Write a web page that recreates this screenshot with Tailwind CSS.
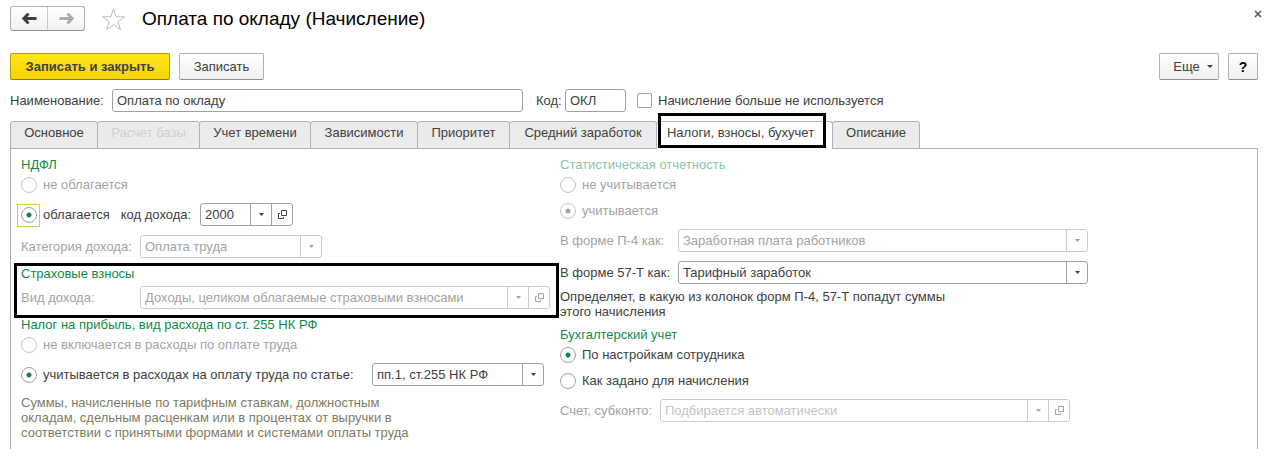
<!DOCTYPE html>
<html lang="ru">
<head>
  <meta charset="UTF-8" />
  <meta name="viewport" content="width=device-width, initial-scale=1.0" />
  <title>Оплата по окладу (Начисление)</title>
  <script src="https://cdn.jsdelivr.net/npm/@tailwindcss/browser@4"></script>
</head>
<body class="bg-white font-['Liberation_Sans',Arial,sans-serif] text-[13px] leading-4 text-[#404040]">

  <!-- Title bar -->
  <header class="flex items-center pl-[10px] pr-[3px] pt-1.5">
    <div class="flex h-[25px] w-[75px] rounded-[3px] border border-[#b0b0b0] border-b-[#8f8f8f] bg-gradient-to-b from-white to-[#f2f2f2]">
      <button type="button" aria-label="Назад" class="flex flex-1 items-center justify-center border-r border-[#c8c8c8]">
        <svg width="15" height="11" viewBox="0 0 15 11"><path d="M6.500 0.500 1.800 5.500l4.700 5M2 5.500H14.500" fill="none" stroke="#404040" stroke-width="2.800"/></svg>
      </button>
      <button type="button" aria-label="Вперед" class="flex flex-1 items-center justify-center">
        <svg width="15" height="11" viewBox="0 0 15 11"><path d="M8.500 0.500l4.700 5-4.700 5M13 5.500H0.500" fill="none" stroke="#ababab" stroke-width="2.800"/></svg>
      </button>
    </div>
    <button type="button" aria-label="В избранное" class="ml-4">
      <svg class="block" width="25" height="24" viewBox="0 0 25 24"><path d="M12.5 2l2.7 7.8h8.3l-6.7 4.9 2.6 7.9-6.9-4.9-6.9 4.9 2.6-7.9L1.5 9.800h8.300z" fill="#fff" stroke="#b8bcc0" stroke-width="1"/></svg>
    </button>
    <h1 class="ml-4 text-[19px] leading-6 text-black">Оплата по окладу (Начисление)</h1>
    <button type="button" aria-label="Закрыть" class="ml-auto flex h-4 w-4 items-center justify-center self-start">
      <svg width="8" height="8" viewBox="0 0 8 8"><path d="M1 1l6 6M7 1L1 7" stroke="#555" stroke-width="1.5"/></svg>
    </button>
  </header>

  <main class="pl-[10px] pr-[11px]">
    <!-- Command bar -->
    <div class="mt-[22px] flex gap-[9px]">
      <button type="button" class="h-[27px] w-[160px] rounded-xs border border-[#b59c00] border-b-[#8f7c00] bg-gradient-to-b from-[#ffe619] to-[#f7d600] font-bold">Записать и закрыть</button>
      <button type="button" class="h-[27px] w-[85px] rounded-xs border border-[#b0b0b0] border-b-[#8f8f8f] bg-gradient-to-b from-white to-[#f0f0f0]">Записать</button>
      <button type="button" class="ml-auto flex h-[27px] w-[60px] items-center justify-center gap-[7px] rounded-xs border border-[#b0b0b0] border-b-[#8f8f8f] bg-gradient-to-b from-white to-[#f0f0f0] pl-2">
        Еще
        <svg width="6" height="3" viewBox="0 0 6 3"><path d="M0 0h6L3 3z" fill="#404040"/></svg>
      </button>
      <button type="button" aria-label="Справка" class="h-[27px] w-[30px] rounded-xs border border-[#b0b0b0] border-b-[#8f8f8f] bg-gradient-to-b from-white to-[#f0f0f0] text-sm font-bold text-black">?</button>
    </div>

    <!-- Name and code -->
    <div class="mt-[9px] flex items-center">
      <label for="name" class="w-[102px]">Наименование:</label>
      <input id="name" type="text" value="Оплата по окладу" class="h-[23px] w-[411px] rounded-[3px] border border-[#a0a0a0] px-1" />
      <label for="code" class="ml-[13px] w-[29px]">Код:</label>
      <input id="code" type="text" value="ОКЛ" class="h-[23px] w-[61px] rounded-[3px] border border-[#a0a0a0] px-1" />
      <input id="unused" type="checkbox" class="ml-[11px] h-[15px] w-[15px] appearance-none rounded-xs border border-[#a0a0a0] bg-white" />
      <label for="unused" class="ml-1.5">Начисление больше не используется</label>
    </div>

    <!-- Tabs -->
    <nav class="relative z-10 mt-[9px] -mb-px flex h-7">
      <button type="button" class="w-[88px] rounded-t-[3px] border border-[#b0b0b0] bg-[#ebebeb] pb-1">Основное</button>
      <button type="button" disabled class="-ml-px w-[103px] rounded-t-[3px] border border-[#b0b0b0] bg-[#ebebeb] pb-1 text-[#d0d0d0]">Расчет базы</button>
      <button type="button" class="-ml-px w-[112px] rounded-t-[3px] border border-[#b0b0b0] bg-[#ebebeb] pb-1">Учет времени</button>
      <button type="button" class="-ml-px w-[108px] rounded-t-[3px] border border-[#b0b0b0] bg-[#ebebeb] pb-1">Зависимости</button>
      <button type="button" class="-ml-px w-[93px] rounded-t-[3px] border border-[#b0b0b0] bg-[#ebebeb] pb-1">Приоритет</button>
      <button type="button" class="-ml-px w-[148px] rounded-t-[3px] border border-[#b0b0b0] bg-[#ebebeb] pb-1">Средний заработок</button>
      <button type="button" class="relative -ml-px w-[177px] rounded-t-[3px] border border-[#b0b0b0] border-b-white bg-white pb-1 pr-2">
        Налоги, взносы, бухучет
        <span class="absolute -top-[9px] left-[1px] h-[35px] w-[168px] border-[3px] border-black"></span>
      </button>
      <button type="button" class="-ml-px w-[88px] rounded-t-[3px] border border-[#b0b0b0] bg-[#ebebeb] pb-1">Описание</button>
    </nav>

    <!-- Tab content -->
    <div class="grid grid-cols-[539px_1fr] border-x border-t border-[#b0b0b0] pb-[9px] pl-[10px] pt-2">
      <section>
        <h2 class="text-[#0f8a4c]">НДФЛ</h2>
        <label class="mt-0.5 flex h-5 items-center gap-1.5 text-[#a3a3a3]">
          <input type="radio" name="ndfl" disabled class="h-4 w-4 appearance-none rounded-full border border-[#c4c4c4]" />
          не облагается
        </label>
        <div class="mt-2 flex items-center">
          <label class="relative flex items-center gap-1.5">
            <input type="radio" name="ndfl" checked class="h-4 w-4 appearance-none rounded-full border border-[#a0a0a0] bg-[radial-gradient(circle,#0f8a4c_2px,transparent_3px)]" />
            облагается
            <span class="absolute -left-1 -top-[3px] h-[23px] w-[23px] border border-[#e6c83c]"></span>
          </label>
          <label for="income-code" class="ml-[11px]">код дохода:</label>
          <div class="ml-auto mr-[267px] flex h-[23px] w-[93px] rounded-[3px] border border-[#a0a0a0]">
            <div class="relative flex-1">
              <select id="income-code" class="h-full w-full appearance-none px-1"><option>2000</option></select>
              <span class="pointer-events-none absolute inset-y-0 right-0 flex w-[21px] items-center justify-center border-l border-[#a0a0a0]">
                <svg width="5" height="3" viewBox="0 0 5 3"><path d="M0 0h5L2.500 3z" fill="#404040"/></svg>
              </span>
            </div>
            <button type="button" aria-label="Открыть" class="flex w-[21px] items-center justify-center border-l border-[#a0a0a0]">
              <svg width="9" height="9" viewBox="0 0 9 9"><path d="M3.500 0.500h5v5h-5zM2 3.500H0.500v5h5V7" fill="none" stroke="#404040"/></svg>
            </button>
          </div>
        </div>
        <div class="mt-[9px] flex items-center text-[#a3a3a3]">
          <label for="category" class="w-[119px]">Категория дохода:</label>
          <div class="relative h-[23px] w-[182px] rounded-[3px] border border-[#cacaca]">
            <select id="category" disabled class="h-full w-full appearance-none px-1"><option>Оплата труда</option></select>
            <span class="pointer-events-none absolute inset-y-0 right-0 flex w-[21px] items-center justify-center border-l border-[#cacaca]">
              <svg width="5" height="3" viewBox="0 0 5 3"><path d="M0 0h5L2.500 3z" fill="#a3a3a3"/></svg>
            </span>
          </div>
        </div>

        <div class="relative mt-2">
          <h2 class="text-[#0f8a4c]">Страховые взносы</h2>
          <div class="mt-1 flex items-center text-[#a3a3a3]">
            <label for="income-kind" class="w-[119px]">Вид дохода:</label>
            <div class="flex h-[23px] w-[410px] rounded-[3px] border border-[#cacaca]">
              <div class="relative flex-1">
                <select id="income-kind" disabled class="h-full w-full appearance-none px-1"><option>Доходы, целиком облагаемые страховыми взносами</option></select>
                <span class="pointer-events-none absolute inset-y-0 right-0 flex w-[21px] items-center justify-center border-l border-[#cacaca]">
                  <svg width="5" height="3" viewBox="0 0 5 3"><path d="M0 0h5L2.500 3z" fill="#a3a3a3"/></svg>
                </span>
              </div>
              <button type="button" aria-label="Открыть" class="flex w-[21px] items-center justify-center border-l border-[#cacaca]">
                <svg width="9" height="9" viewBox="0 0 9 9"><path d="M3.500 0.500h5v5h-5zM2 3.500H0.500v5h5V7" fill="none" stroke="#a3a3a3"/></svg>
              </button>
            </div>
          </div>
          <span class="pointer-events-none absolute -bottom-[9px] -left-[7px] -top-[3px] right-px border-[3px] border-black"></span>
        </div>

        <h2 class="mt-2 text-[#0f8a4c]">Налог на прибыль, вид расхода по ст. 255 НК РФ</h2>
        <label class="mt-0.5 flex h-5 items-center gap-1.5 text-[#a3a3a3]">
          <input type="radio" name="profit" disabled class="h-4 w-4 appearance-none rounded-full border border-[#c4c4c4]" />
          не включается в расходы по оплате труда
        </label>
        <div class="mt-2 flex items-center">
          <label class="flex w-[351px] items-center gap-1.5">
            <input type="radio" name="profit" checked class="h-4 w-4 appearance-none rounded-full border border-[#a0a0a0] bg-[radial-gradient(circle,#0f8a4c_2px,transparent_3px)]" />
            учитывается в расходах на оплату труда по статье:
          </label>
          <div class="relative h-[23px] w-[172px] rounded-[3px] border border-[#a0a0a0]">
            <select aria-label="Статья" class="h-full w-full appearance-none px-1"><option>пп.1, ст.255 НК РФ</option></select>
            <span class="pointer-events-none absolute inset-y-0 right-0 flex w-[21px] items-center justify-center border-l border-[#a0a0a0]">
              <svg width="5" height="3" viewBox="0 0 5 3"><path d="M0 0h5L2.500 3z" fill="#404040"/></svg>
            </span>
          </div>
        </div>
        <p class="mt-[9px] leading-[15px] text-[#7c7c64]">
          Суммы, начисленные по тарифным ставкам, должностным<br>
          окладам, сдельным расценкам или в процентах от выручки в<br>
          соответствии с принятыми формами и системами оплаты труда
        </p>
      </section>

      <section>
        <h2 class="text-[#87c5a5]">Статистическая отчетность</h2>
        <label class="mt-0.5 flex h-5 items-center gap-1.5 text-[#a3a3a3]">
          <input type="radio" name="stat" disabled class="h-4 w-4 appearance-none rounded-full border border-[#c4c4c4]" />
          не учитывается
        </label>
        <label class="mt-1.5 flex h-5 items-center gap-1.5 text-[#a3a3a3]">
          <input type="radio" name="stat" checked disabled class="h-4 w-4 appearance-none rounded-full border border-[#c4c4c4] bg-[radial-gradient(circle,#a3a3a3_2px,transparent_3px)]" />
          учитывается
        </label>
        <div class="mt-2 flex items-center text-[#a3a3a3]">
          <label for="form-p4" class="w-[118px]">В форме П-4 как:</label>
          <div class="relative h-[23px] w-[410px] rounded-[3px] border border-[#cacaca]">
            <select id="form-p4" disabled class="h-full w-full appearance-none px-1"><option>Заработная плата работников</option></select>
            <span class="pointer-events-none absolute inset-y-0 right-0 flex w-[21px] items-center justify-center border-l border-[#cacaca]">
              <svg width="5" height="3" viewBox="0 0 5 3"><path d="M0 0h5L2.500 3z" fill="#a3a3a3"/></svg>
            </span>
          </div>
        </div>
        <div class="mt-[9px] flex items-center">
          <label for="form-57t" class="w-[118px]">В форме 57-Т как:</label>
          <div class="relative h-[23px] w-[410px] rounded-[3px] border border-[#a0a0a0]">
            <select id="form-57t" class="h-full w-full appearance-none px-1"><option>Тарифный заработок</option></select>
            <span class="pointer-events-none absolute inset-y-0 right-0 flex w-[21px] items-center justify-center border-l border-[#a0a0a0]">
              <svg width="5" height="3" viewBox="0 0 5 3"><path d="M0 0h5L2.500 3z" fill="#404040"/></svg>
            </span>
          </div>
        </div>
        <p class="mt-[5px] leading-[15px]">
          Определяет, в какую из колонок форм П-4, 57-Т попадут суммы<br>
          этого начисления
        </p>

        <h2 class="mt-2 text-[#0f8a4c]">Бухгалтерский учет</h2>
        <label class="mt-0.5 flex h-5 items-center gap-1.5">
          <input type="radio" name="accounting" checked class="h-4 w-4 appearance-none rounded-full border border-[#a0a0a0] bg-[radial-gradient(circle,#0f8a4c_2px,transparent_3px)]" />
          По настройкам сотрудника
        </label>
        <label class="mt-1.5 flex h-5 items-center gap-1.5">
          <input type="radio" name="accounting" class="h-4 w-4 appearance-none rounded-full border border-[#a0a0a0]" />
          Как задано для начисления
        </label>
        <div class="mt-2 flex items-center text-[#a3a3a3]">
          <label for="account" class="w-[100px]">Счет, субконто:</label>
          <div class="flex h-[23px] w-[410px] rounded-[3px] border border-[#cacaca]">
            <div class="relative flex-1">
              <select id="account" disabled class="h-full w-full appearance-none px-1 text-[#c4c4c4]"><option>Подбирается автоматически</option></select>
              <span class="pointer-events-none absolute inset-y-0 right-0 flex w-[21px] items-center justify-center border-l border-[#cacaca]">
                <svg width="5" height="3" viewBox="0 0 5 3"><path d="M0 0h5L2.500 3z" fill="#a3a3a3"/></svg>
              </span>
            </div>
            <button type="button" aria-label="Открыть" class="flex w-[21px] items-center justify-center border-l border-[#cacaca]">
              <svg width="9" height="9" viewBox="0 0 9 9"><path d="M3.500 0.500h5v5h-5zM2 3.500H0.500v5h5V7" fill="none" stroke="#a3a3a3"/></svg>
            </button>
          </div>
        </div>
      </section>
    </div>
  </main>
</body>
</html>
